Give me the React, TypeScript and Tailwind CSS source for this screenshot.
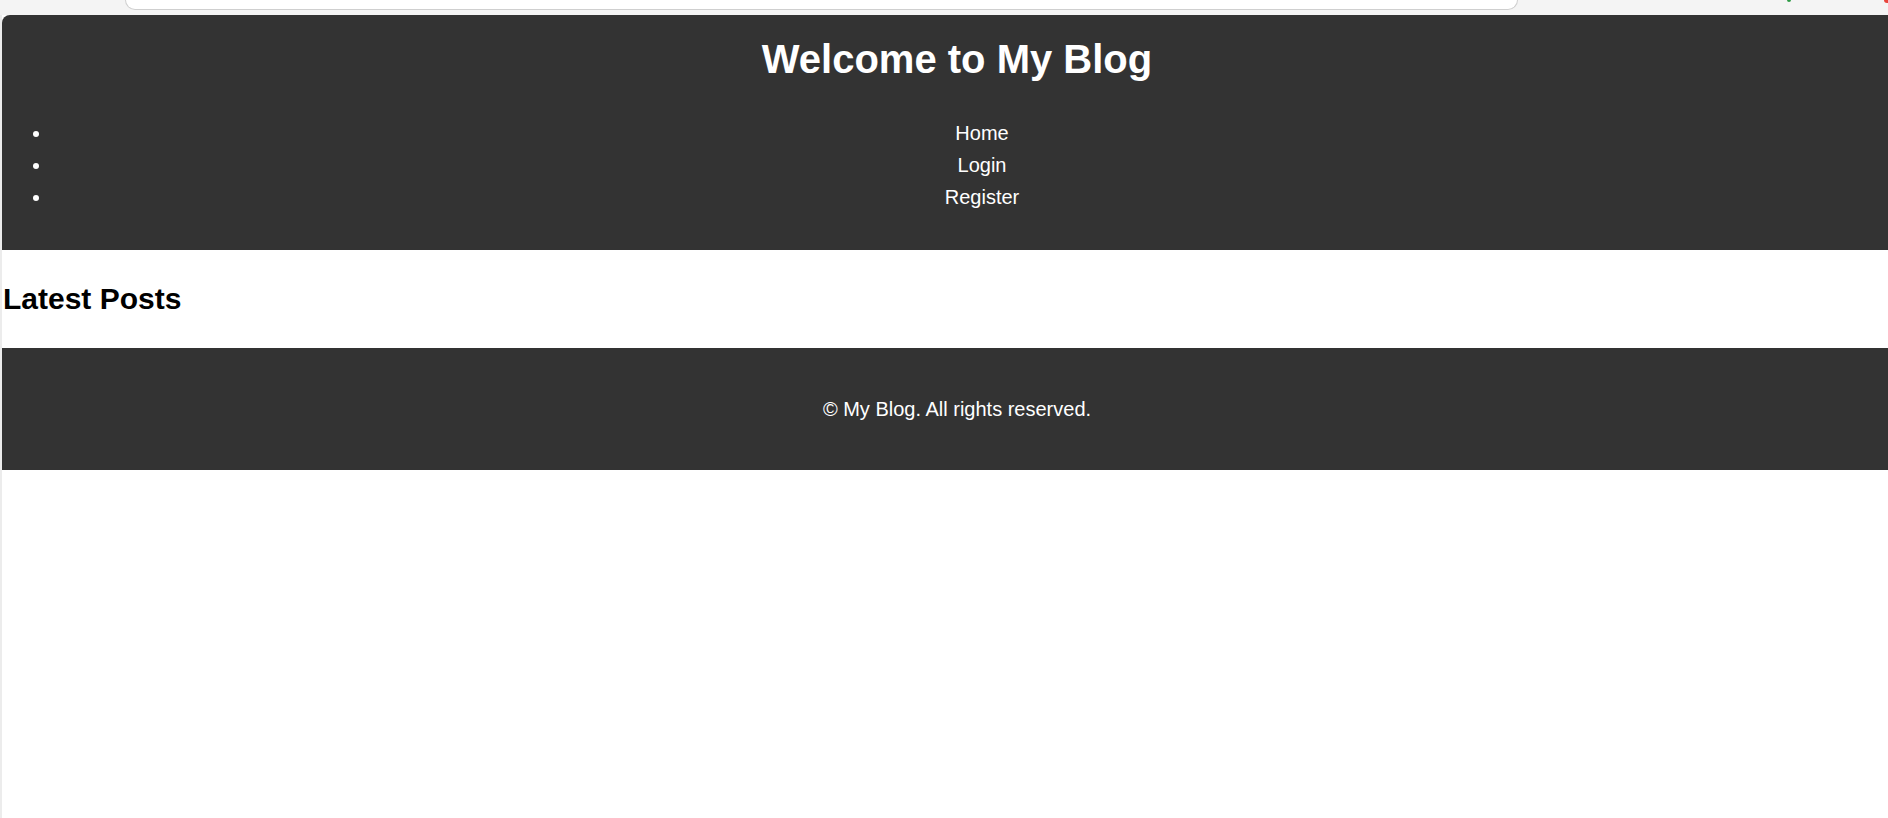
import React from 'react';

const navLinks = ['Home', 'Login', 'Register'];

const BrowserStrip: React.FC = () => (
    <div className="flex h-[15px] items-start bg-[#f4f4f4]">
        <div className="ml-[125px] h-[10px] w-[1393px] rounded-b-[14px] border border-t-0 border-[#cfcfcf] bg-white"></div>
        <div className="ml-[269px] h-[2px] w-[4px] rounded-b-full bg-[#2e9b45]"></div>
        <div className="ml-[93px] h-[3px] w-[4px] rounded-bl-full bg-[#e8453c]"></div>
    </div>
);

export default function App() {
    return (
        <div className="h-[818px] w-full overflow-hidden bg-white font-['Liberation_Sans',Arial,sans-serif]">
            <BrowserStrip />
            <div className="flex h-[803px]">
                <div className="w-[2px] shrink-0 bg-[#ececec]"></div>
                <div className="w-[1910px] shrink-0">
                    <header className="h-[235px] rounded-tl-[8px] bg-[#333333] pt-[21px] text-white">
                        <h1 className="text-center text-[40px] font-bold leading-[46px]">Welcome to My Blog</h1>
                        <nav>
                            <ul className="mt-[35px] list-disc pl-[50px]">
                                {navLinks.map((link) => (
                                    <li key={link} className="text-center text-[20px] leading-[32px]">
                                        <a href="#">{link}</a>
                                    </li>
                                ))}
                            </ul>
                        </nav>
                    </header>
                    <main className="h-[98px] pt-[32px] pl-[1px]">
                        <h2 className="text-[30px] font-bold leading-[34px] text-black">Latest Posts</h2>
                    </main>
                    <footer className="flex h-[122px] items-center justify-center bg-[#333333] text-[20px] text-white">
                        <p>© My Blog. All rights reserved.</p>
                    </footer>
                </div>
            </div>
        </div>
    );
}
